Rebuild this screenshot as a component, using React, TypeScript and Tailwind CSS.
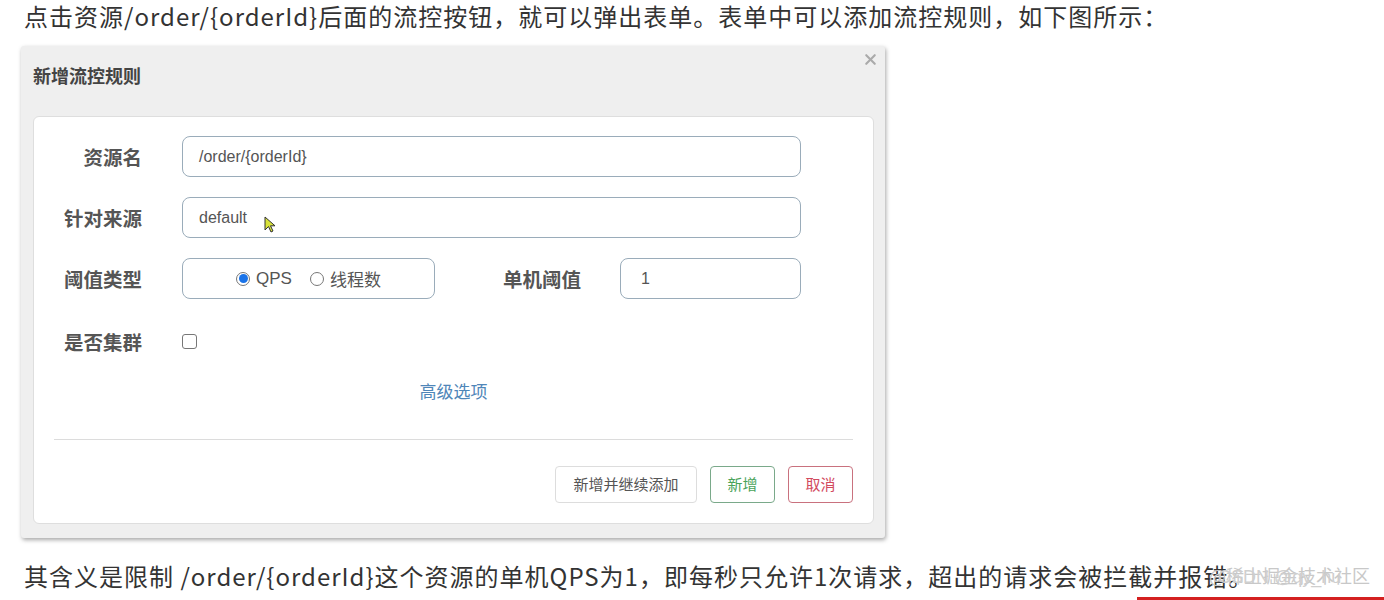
import React from "react";
import { X } from "lucide-react";

const cjk = "font-['Noto_Sans_CJK_SC',sans-serif]";
const field =
  "h-[41px] rounded-[8px] border border-[#9aacba] bg-white px-4 flex items-center text-[16px] text-[#555] font-['Liberation_Sans','Noto_Sans_CJK_SC',sans-serif]";

const Label = ({ children, className = "" }: { children: React.ReactNode; className?: string }) => (
  <div className={`text-right text-[19.5px] font-bold text-[#555] ${className}`}>{children}</div>
);

const App = () => {
  return (
    <main className={`relative w-[1384px] h-[600px] overflow-hidden bg-white ${cjk}`}>
      <p className="pl-[24px] text-[24px] leading-[31px] text-[#333] tracking-[1px]">
        点击资源/order/{"{orderId}"}后面的流控按钮，就可以弹出表单。表单中可以添加流控规则，如下图所示：
      </p>

      <div className="relative mt-[15px] ml-[21px] w-[864px] h-[492px] bg-[#efefef] rounded-[3px] shadow-[1px_2px_4px_rgba(0,0,0,0.35)] flex flex-col">
        <header className="h-[70px] pl-[12px] pt-[15px]">
          <h2 className="text-[18px] leading-[28px] font-bold text-[#444]">新增流控规则</h2>
        </header>
        <X className="absolute right-[6px] top-[5px] h-[17px] w-[17px] text-[#aaa]" strokeWidth={3} />

        <div className="ml-[12px] mr-[11px] h-[408px] rounded-[6px] border border-[#dedede] bg-white pt-[19px] px-[20px] flex flex-col">
          <div className="flex flex-col gap-[20px]">
            <div className="flex items-center">
              <Label className="w-[88px]">资源名</Label>
              <div className={`${field} ml-[40px] w-[619px]`}>/order/{"{orderId}"}</div>
            </div>
            <div className="flex items-center">
              <Label className="w-[88px]">针对来源</Label>
              <div className={`${field} ml-[40px] w-[619px] relative`}>
                default
                <svg className="absolute left-[81px] top-[18px]" width="13" height="18" viewBox="0 0 13 18">
                  <path d="M1 1 L1 14 L4.5 10.5 L7 16 L9 15 L6.5 9.8 L11 9.8 Z" fill="#d8e23a" stroke="#333" strokeWidth="1" />
                </svg>
              </div>
            </div>
            <div className="flex items-center">
              <Label className="w-[88px]">阈值类型</Label>
              <div className={`${field} ml-[40px] w-[253px] justify-center gap-[6px] ${cjk}`}>
                <span className="h-[14px] w-[14px] rounded-full border border-[#777] flex items-center justify-center">
                  <span className="h-[9px] w-[9px] rounded-full bg-[#1a73e8]" />
                </span>
                <span className="text-[17px] mr-[12px] font-['Liberation_Sans',sans-serif]">QPS</span>
                <span className="h-[14px] w-[14px] rounded-full border border-[#777]" />
                <span className="text-[17px]">线程数</span>
              </div>
              <Label className="w-[146px]">单机阈值</Label>
              <div className={`${field} ml-[39px] w-[181px] !px-[20px]`}>1</div>
            </div>
            <div className="flex items-center mt-[2px] h-[41px]">
              <Label className="w-[88px]">是否集群</Label>
              <span className="ml-[40px] h-[15px] w-[15px] rounded-[3px] border-[1.5px] border-[#777]" />
            </div>
          </div>

          <div className="mt-[14px] text-center text-[17px] leading-[30px] text-[#4f86b8]">高级选项</div>

          <div className="mt-[33px] h-px bg-[#dcdcdc]" />

          <div className="mt-[26px] flex justify-end gap-[13px] text-[15px]">
            <button className="h-[37px] w-[142px] rounded-[4px] border border-[#ddd] text-[#555]">新增并继续添加</button>
            <button className="h-[37px] w-[65px] rounded-[4px] border border-[#7aa98a] text-[#49a35a]">新增</button>
            <button className="h-[37px] w-[65px] rounded-[4px] border border-[#c9717e] text-[#d24a5e]">取消</button>
          </div>
        </div>
      </div>

      <p className="mt-[22px] pl-[24px] text-[24px] leading-[31px] text-[#333] tracking-[1px]">
        其含义是限制 /order/{"{orderId}"}这个资源的单机QPS为1，即每秒只允许1次请求，超出的请求会被拦截并报错。
      </p>

      <span className="absolute left-[1209px] top-[562px] text-[18px] text-[#c8c8c8]">@稀土掘金技术社区</span>
      <span className="absolute left-[1218px] top-[564px] text-[18px] text-[#cfcfcf] font-['Liberation_Sans',sans-serif]">CSDN @qy_hu</span>
      <div className="absolute left-[1137px] top-[597px] h-[3px] w-[247px] bg-[#d42020]" />
    </main>
  );
};

export default App;
